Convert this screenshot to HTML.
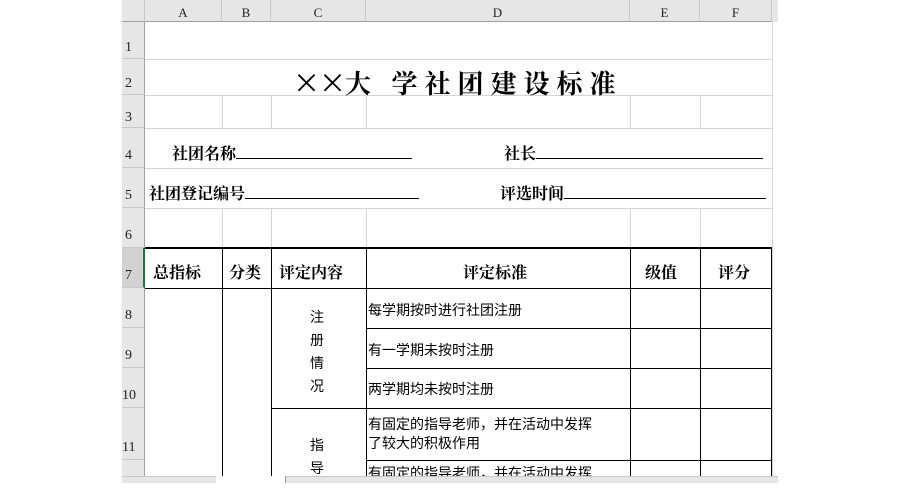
<!DOCTYPE html>
<html><head><meta charset="utf-8"><style>
body{margin:0;width:900px;height:483px;background:#fff;position:relative;overflow:hidden;font-family:"Liberation Sans","Noto Sans CJK SC",sans-serif}
div{position:absolute;box-sizing:border-box}
.ch{top:0;height:22px;background:#e6e6e6;border-right:1px solid #c8c8c8;border-bottom:1px solid #a0a0a0;font:13px "Liberation Serif","Noto Serif CJK SC",serif;text-align:center;line-height:26px;color:#222}
.rh{left:122px;width:23px;background:#e6e6e6;border-bottom:1px solid #c8c8c8;border-right:1px solid #a0a0a0;font:14px "Liberation Serif",serif;color:#222;padding-left:3px}
.h{height:1px;background:#d4d4d4;left:145px;width:627px}
.v{width:1px;background:#d4d4d4}
.b{background:#000}
.t{white-space:nowrap;color:#000}
.bold{font-weight:bold;font-family:"Liberation Serif","Noto Serif CJK SC",serif}
.u{display:inline-block;border-bottom:1px solid #000;height:14px;vertical-align:baseline}
</style></head><body>
<div class="ch" style="left:122px;width:23px"></div>
<div class="ch" style="left:145px;width:77px">A</div>
<div class="ch" style="left:222px;width:49px">B</div>
<div class="ch" style="left:271px;width:95px">C</div>
<div class="ch" style="left:366px;width:264px">D</div>
<div class="ch" style="left:630px;width:70px">E</div>
<div class="ch" style="left:700px;width:72px">F</div>
<div class="ch" style="left:772px;width:6px;border:none;background:#e6e6e6"></div>
<div style="left:772px;top:22px;width:6px;height:455px;background:#fff;border-left:1px solid #d4d4d4"></div>

<div class="rh" style="top:22px;height:37px;line-height:52px">1</div>
<div class="rh" style="top:59px;height:36px;line-height:50px">2</div>
<div class="rh" style="top:95px;height:33px;line-height:46px">3</div>
<div class="rh" style="top:128px;height:40px;line-height:56px">4</div>
<div class="rh" style="top:168px;height:40px;line-height:56px">5</div>
<div class="rh" style="top:208px;height:40px;line-height:56px">6</div>
<div class="rh" style="top:248px;height:40px;line-height:56px;background:#d2d2d2;border-right:2px solid #217346">7</div>
<div class="rh" style="top:288px;height:40px;line-height:56px">8</div>
<div class="rh" style="top:328px;height:40px;line-height:56px">9</div>
<div class="rh" style="top:368px;height:40px;line-height:56px;padding-left:0">10</div>
<div class="rh" style="top:408px;height:52px;line-height:80px;padding-left:0">11</div>
<div class="rh" style="top:460px;height:20px"></div>

<div class="h" style="top:59px"></div><div class="h" style="top:95px"></div><div class="h" style="top:128px"></div>
<div class="h" style="top:168px"></div><div class="h" style="top:208px"></div>
<div class="v" style="left:222px;top:95px;height:33px"></div><div class="v" style="left:271px;top:95px;height:33px"></div>
<div class="v" style="left:366px;top:95px;height:33px"></div><div class="v" style="left:630px;top:95px;height:33px"></div>
<div class="v" style="left:700px;top:95px;height:33px"></div>
<div class="v" style="left:222px;top:208px;height:40px"></div><div class="v" style="left:271px;top:208px;height:40px"></div>
<div class="v" style="left:366px;top:208px;height:40px"></div><div class="v" style="left:630px;top:208px;height:40px"></div>
<div class="v" style="left:700px;top:208px;height:40px"></div>

<div class="b" style="left:145px;top:247px;width:627px;height:2px"></div>
<div class="b" style="left:145px;top:288px;width:627px;height:1px"></div>
<div class="b" style="left:366px;top:328px;width:406px;height:1px"></div>
<div class="b" style="left:366px;top:368px;width:406px;height:1px"></div>
<div class="b" style="left:271px;top:408px;width:501px;height:1px"></div>
<div class="b" style="left:366px;top:460px;width:406px;height:1px"></div>
<div class="b" style="left:222px;top:248px;width:1px;height:230px"></div>
<div class="b" style="left:271px;top:248px;width:1px;height:230px"></div>
<div class="b" style="left:366px;top:248px;width:1px;height:230px"></div>
<div class="b" style="left:630px;top:248px;width:1px;height:230px"></div>
<div class="b" style="left:700px;top:248px;width:1px;height:230px"></div>
<div class="b" style="left:771px;top:248px;width:1px;height:230px"></div>

<div class="t bold" style="left:293px;top:62px;font-size:26px"><span style="font-family:'Noto Sans CJK SC';font-weight:normal;font-size:27px;letter-spacing:-1px">××</span><span style="letter-spacing:7px">大 学社团建设标准</span></div>
<div class="t bold" style="left:172px;top:141px;font-size:16px">社团名称<span class="u" style="width:176px"></span></div>
<div class="t bold" style="left:504px;top:141px;font-size:16px">社长<span class="u" style="width:227px"></span></div>
<div class="t bold" style="left:149px;top:181px;font-size:16px">社团登记编号<span class="u" style="width:174px"></span></div>
<div class="t bold" style="left:500px;top:181px;font-size:16px">评选时间<span class="u" style="width:202px"></span></div>
<div class="t bold" style="left:153px;top:260px;font-size:16px">总指标</div>
<div class="t bold" style="left:229px;top:260px;font-size:16px">分类</div>
<div class="t bold" style="left:279px;top:260px;font-size:16px">评定内容</div>
<div class="t bold" style="left:463px;top:260px;font-size:16px">评定标准</div>
<div class="t bold" style="left:645px;top:260px;font-size:16px">级值</div>
<div class="t bold" style="left:718px;top:260px;font-size:16px">评分</div>
<div class="t" style="left:310px;top:306px;font-size:14px;line-height:23px;white-space:normal;width:16px">注册情况</div>
<div class="t" style="left:310px;top:434px;font-size:14px;line-height:23px;white-space:normal;width:16px">指导</div>
<div class="t" style="left:368px;top:300px;font-size:14px">每学期按时进行社团注册</div>
<div class="t" style="left:368px;top:340px;font-size:14px">有一学期未按时注册</div>
<div class="t" style="left:368px;top:379px;font-size:14px">两学期均未按时注册</div>
<div class="t" style="left:368px;top:415px;font-size:14px;line-height:19px">有固定的指导老师，并在活动中发挥<br>了较大的积极作用</div>
<div class="t" style="left:368px;top:463px;font-size:14px">有固定的指导老师，并在活动中发挥</div>

<div style="left:122px;top:476px;width:656px;height:7px;background:#e6e6e6;border-top:1px solid #c8c8c8"></div>
<div style="left:216px;top:476px;width:70px;height:7px;background:#fff"></div>
<div style="left:285px;top:476px;width:1px;height:7px;background:#999"></div>
</body></html>
